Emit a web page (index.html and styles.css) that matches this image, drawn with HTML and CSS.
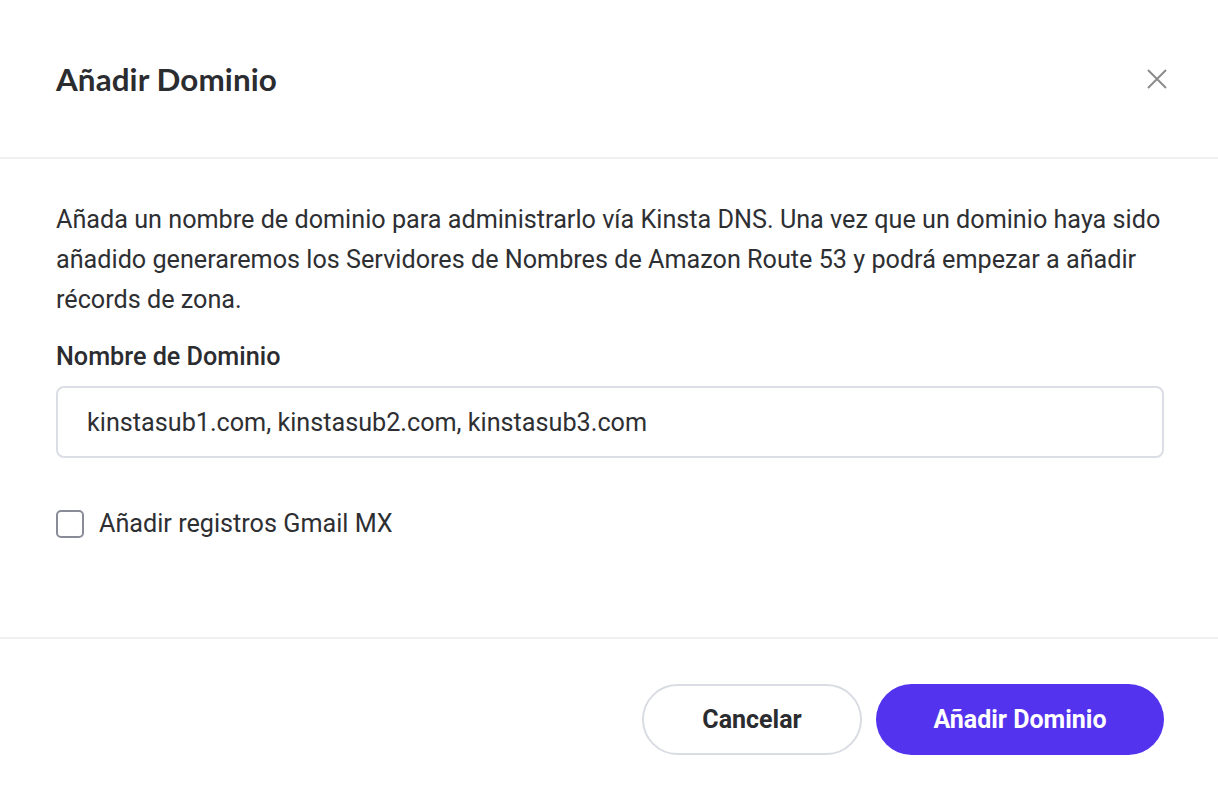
FILE: index.html
```html
<!DOCTYPE html>
<html lang="es">
<head>
<meta charset="utf-8">
<title>Añadir Dominio</title>
<link rel="stylesheet" href="styles.css">
</head>
<body>
<div class="modal">
  <header class="modal-header">
    <h1 class="modal-title">Añadir Dominio</h1>
    <button class="close-btn" aria-label="Cerrar">
      <svg width="20" height="20" viewBox="0 0 20 20"><path d="M1 1L19 19M19 1L1 19" stroke="#8c8c8c" stroke-width="2" fill="none"/></svg>
    </button>
  </header>
  <section class="modal-body">
    <p class="intro">Añada un nombre de dominio para administrarlo vía Kinsta DNS. Una vez que un dominio haya sido añadido generaremos los Servidores de Nombres de Amazon Route 53 y podrá empezar a añadir récords de zona.</p>
    <label class="field-label" for="domain">Nombre de Dominio</label>
    <input id="domain" class="text-input" type="text" value="kinstasub1.com, kinstasub2.com, kinstasub3.com">
    <label class="check-row">
      <span class="checkbox"></span>
      <span class="check-label">Añadir registros Gmail MX</span>
    </label>
  </section>
  <footer class="modal-footer">
    <button class="btn btn-secondary">Cancelar</button>
    <button class="btn btn-primary">Añadir Dominio</button>
  </footer>
</div>
</body>
</html>
```
FILE: styles.css
```css
* { box-sizing: border-box; }
html, body { margin: 0; padding: 0; background: #fff; }
body { font-family: Roboto, "Noto Sans", sans-serif; color: #2e2f33; }

.modal { width: 1218px; height: 796px; display: flex; flex-direction: column; }

.modal-header {
  height: 159px;
  flex: none;
  border-bottom: 2px solid #f0f0f0;
  display: flex;
  align-items: center;
  justify-content: space-between;
  padding: 0 51px 0 56px;
}
.modal-title {
  margin: 0;
  font-family: Lato, "Noto Sans", sans-serif;
  font-weight: 700;
  font-size: 31.4px;
  letter-spacing: 0.1px;
  color: #2b2c30;
}
.close-btn {
  border: 0; background: transparent; padding: 0; width: 20px; height: 20px;
  display: flex; cursor: pointer;
}

.modal-body {
  height: 480px;
  flex: none;
  border-bottom: 2px solid #f0f0f0;
  padding: 0 54px 0 56px;
  display: flex;
  flex-direction: column;
}
.intro {
  margin: 41px 0 0 0;
  font-size: 25.2px;
  line-height: 40px;
  color: #2e2f33;
}
.field-label {
  display: block;
  margin-top: 22px;
  font-size: 25.2px;
  font-weight: 500;
  line-height: 30px;
  color: #2b2c30;
}
.text-input {
  margin-top: 14px;
  width: 1108px;
  height: 72px;
  flex: none;
  border: 2px solid #dcdee5;
  border-radius: 8px;
  padding: 0 29px;
  font-family: Roboto, "Noto Sans", sans-serif;
  font-size: 25.2px;
  color: #2e2f33;
  outline: none;
}
.check-row {
  margin-top: 51px;
  height: 30px;
  display: flex;
  align-items: center;
  gap: 15px;
}
.checkbox {
  width: 28px; height: 28px;
  border: 2px solid #898c98;
  border-radius: 5px;
  flex: none;
}
.check-label { font-size: 25.2px; line-height: 30px; color: #2e2f33; }

.modal-footer {
  flex: 1;
  display: flex;
  justify-content: flex-end;
  align-items: flex-start;
  padding: 45px 54px 0 0;
  gap: 14px;
}
.btn {
  height: 71px;
  border-radius: 36px;
  font-family: Roboto, "Noto Sans", sans-serif;
  font-weight: 700;
  font-size: 25px;
  cursor: pointer;
}
.btn-secondary {
  width: 220px;
  background: #fff;
  border: 2px solid #d9dce3;
  color: #2b2c30;
}
.btn-primary {
  width: 288px;
  background: #5333ed;
  border: 0;
  color: #fff;
}
```
